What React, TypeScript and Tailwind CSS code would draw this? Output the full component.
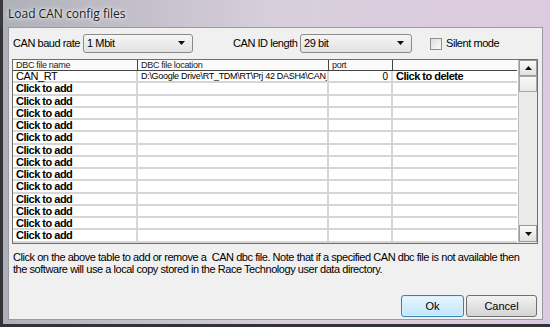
import React from "react";

const rows = Array.from({ length: 14 }, (_, i) => i);

function Combo({ value, width }: { value: string; width: string }) {
  return (
    <div
      className={`${width} h-[19px] flex items-center justify-between rounded-[3px] border border-[#8a8a8a] bg-gradient-to-b from-[#f6f6f6] to-[#e2e2e2] pl-[3px] pr-[6px]`}
    >
      <span className="text-[11px] tracking-[-0.4px] text-black leading-none">{value}</span>
      <svg width="8" height="5" viewBox="0 0 8 5">
        <path d="M0 0 H7 L3.5 4 Z" fill="#111" />
      </svg>
    </div>
  );
}

export default function App() {
  return (
    <div
      className="w-[550px] h-[327px] flex flex-col bg-gradient-to-r from-[#aeb0b8] via-[#d8cfdc] to-[#dccbdf] overflow-hidden"
      style={{ fontFamily: '"Liberation Sans", Arial, sans-serif' }}
    >
      <div className="h-[27px] flex items-center pl-[8px] border-l-[3px] border-[#3a3a3e]">
        <span
          className="text-[12px] text-[#1a1a1a] -ml-[3px]"
          style={{ fontFamily: '"Open Sans", "Noto Sans", sans-serif', textShadow: "0 0 6px #fff, 0 0 3px #fff" }}
        >
          Load CAN config files
        </span>
      </div>
      <div className="flex-1 flex border-l-[3px] border-b-[3px] border-[#343438]">
        <div className="w-[5px]" />
        <div className="flex-1 mb-[4px] mr-[7px] bg-[#f0f0f0] border border-[#9a9aa6] flex flex-col">
          {/* top controls */}
          <div className="flex items-center h-[19px] mt-[6px] text-[11px] tracking-[-0.45px] text-black whitespace-nowrap">
            <span className="ml-[4px] w-[70px]">CAN baud rate</span>
            <Combo value="1 Mbit" width="w-[110px]" />
            <span className="ml-[40px] w-[67px]">CAN ID length</span>
            <Combo value="29 bit" width="w-[112px]" />
            <div className="ml-[18px] w-[12px] h-[12px] border border-[#8e8f8f] bg-gradient-to-br from-[#dcdcdc] to-[#fbfbfb]" />
            <span className="ml-[4px]">Silent mode</span>
          </div>
          {/* table */}
          <div className="ml-[3px] mt-[6px] w-[526px] h-[185px] border border-[#6e6e6e] bg-white flex overflow-hidden">
            <div className="w-[505px] flex flex-col overflow-hidden">
              <div className="h-[11px] flex border-b border-[#444] bg-[#fafafa] text-[9px] tracking-[-0.3px] leading-[10px] text-[#222] shrink-0">
                <div className="w-[125px] pl-[3px] border-r border-[#444]">DBC file name</div>
                <div className="w-[191px] pl-[3px] border-r border-[#444]">DBC file location</div>
                <div className="w-[64px] pl-[3px] border-r border-[#444]">port</div>
                <div className="flex-1" />
              </div>
              <div className="h-[12.25px] flex border-b-2 border-[#d6d6d6] shrink-0 items-center">
                <div className="w-[125px] h-full pl-[3px] border-r-2 border-[#d6d6d6] text-[11px] tracking-[-0.4px] leading-[11px] text-black">CAN_RT</div>
                <div className="w-[191px] h-full pl-[3px] border-r-2 border-[#d6d6d6] text-[9px] tracking-[-0.3px] leading-[11px] text-black whitespace-nowrap overflow-hidden">
                  D:\Google Drive\RT_TDM\RT\Prj 42 DASH4\CAN_RT.dbc
                </div>
                <div className="w-[64px] h-full pr-[3px] border-r-2 border-[#d6d6d6] text-[10px] leading-[11px] text-black text-right">0</div>
                <div className="flex-1 h-full pl-[3px] text-[11px] tracking-[-0.5px] leading-[11px] font-bold text-black">Click to delete</div>
              </div>
              {rows.map((r) => (
                <div key={r} className="h-[12.25px] flex border-b-2 border-[#d6d6d6] shrink-0">
                  <div className="w-[125px] h-full pl-[3px] border-r-2 border-[#d6d6d6] text-[11px] tracking-[-0.5px] leading-[11px] font-bold text-black whitespace-nowrap">Click to add</div>
                  <div className="w-[191px] h-full border-r-2 border-[#d6d6d6]" />
                  <div className="w-[64px] h-full border-r-2 border-[#d6d6d6]" />
                  <div className="flex-1 h-full" />
                </div>
              ))}
            </div>
            <div className="w-[19px] ml-[1px] flex flex-col bg-[#ebebeb] border-l border-[#bbb]">
              <div className="h-[16px] border border-[#9a9a9a] bg-gradient-to-b from-[#fafafa] to-[#e0e0e0] flex items-center justify-center">
                <svg width="7" height="4" viewBox="0 0 7 4"><path d="M0 4 H7 L3.5 0 Z" fill="#111" /></svg>
              </div>
              <div className="h-[16px] border border-[#a8a8a8] bg-gradient-to-b from-[#f8f8f8] to-[#e8e8e8]" />
              <div className="flex-1" />
              <div className="h-[17px] border border-[#9a9a9a] bg-gradient-to-b from-[#fafafa] to-[#e0e0e0] flex items-center justify-center mb-[1px]">
                <svg width="7" height="4" viewBox="0 0 7 4"><path d="M0 0 H7 L3.5 4 Z" fill="#111" /></svg>
              </div>
            </div>
          </div>
          {/* help text */}
          <div className="ml-[4px] mt-[7px] w-[522px] text-[11px] tracking-[-0.45px] leading-[12px] text-black">
            Click on the above table to add or remove a&nbsp; CAN dbc file. Note that if a specified CAN dbc file is not available then the software will use a local copy stored in the Race Technology user data directory.
          </div>
          <div className="flex-1" />
          <div className="flex justify-end gap-[2px] mr-[5px] mb-[2px]">
            <div className="w-[63px] h-[22px] rounded-[3px] border border-[#3c7fb1] bg-gradient-to-b from-[#eaf6fd] to-[#bee6fd] flex items-center justify-center text-[11px] text-black shadow-[inset_0_0_0_1px_#d8f0fc]">
              Ok
            </div>
            <div className="w-[71px] h-[22px] rounded-[3px] border border-[#707070] bg-gradient-to-b from-[#f2f2f2] to-[#d4d4d4] flex items-center justify-center text-[11px] text-black">
              Cancel
            </div>
          </div>
        </div>
      </div>
    </div>
  );
}
